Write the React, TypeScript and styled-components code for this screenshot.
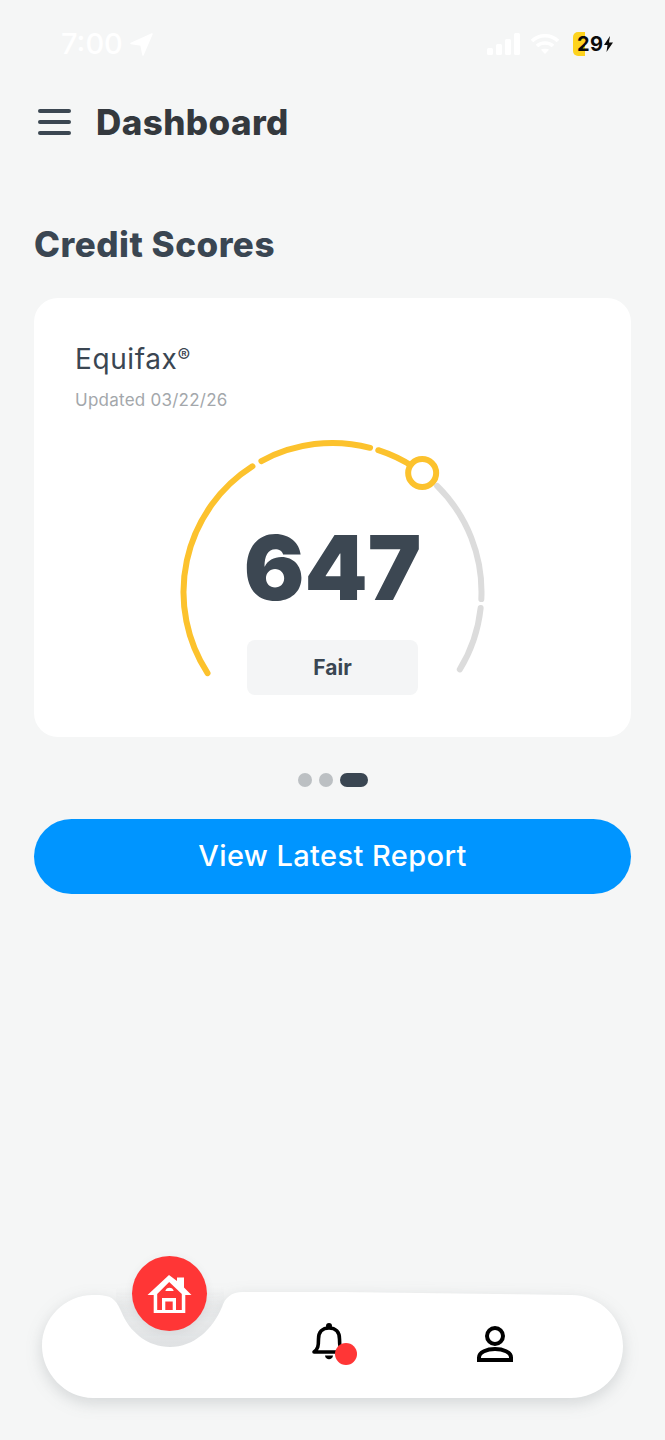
import styled, { createGlobalStyle } from 'styled-components';

const GAUGE_CX = 172.5;
const GAUGE_CY = 172;
const GAUGE_R = 149;

const polar = (deg: number) => {
  const rad = (deg * Math.PI) / 180;
  return [GAUGE_CX + GAUGE_R * Math.sin(rad), GAUGE_CY - GAUGE_R * Math.cos(rad)];
};

const arc = (from: number, to: number) => {
  const [x1, y1] = polar(from);
  const [x2, y2] = polar(to);
  const large = to - from > 180 ? 1 : 0;
  return `M${x1} ${y1} A${GAUGE_R} ${GAUGE_R} 0 ${large} 1 ${x2} ${y2}`;
};

const segments = [
  { from: -123, to: -32.5, color: '#fcc22d' },
  { from: -28.5, to: 14.6, color: '#fcc22d' },
  { from: 17.9, to: 33, color: '#fcc22d' },
  { from: 44.6, to: 92.7, color: '#dcdcdc' },
  { from: 96.2, to: 121.3, color: '#dcdcdc' },
];

const knob = polar(37);

const GlobalStyle = createGlobalStyle`
  html, body {
    margin: 0;
    padding: 0;
    background: #f5f6f6;
    font-family: Inter, "Liberation Sans", sans-serif;
  }
`;

const Page = styled.div`
  width: 665px;
  height: 1440px;
  display: flex;
  flex-direction: column;
  overflow: hidden;
  background: #f5f6f6;
`;

const StatusBar = styled.div`
  height: 32px;
  margin-top: 28px;
  padding: 0 52px 0 61px;
  display: flex;
  align-items: center;
  justify-content: space-between;
`;

const StatusGroup = styled.div<{ $gap: number }>`
  display: flex;
  align-items: center;
  gap: ${(p) => p.$gap}px;
`;

const Clock = styled.span`
  font-size: 29px;
  font-weight: 500;
  color: #ffffff;
  line-height: 32px;
`;

const Battery = styled.div`
  position: relative;
  width: 40px;
  height: 24px;
  margin-left: 4px;
  display: flex;
  align-items: center;
`;

const BatteryFill = styled.div`
  position: absolute;
  left: 0;
  top: 0;
  width: 12px;
  height: 24px;
  border-radius: 5px 0 0 5px;
  background: #fdd31f;
`;

const BatteryText = styled.span`
  position: relative;
  margin-left: 4px;
  font-size: 20px;
  font-weight: 700;
  color: #0b0b0b;
  line-height: 24px;
  letter-spacing: 0.5px;
`;

const Header = styled.div`
  display: flex;
  align-items: center;
  gap: 25px;
  margin-top: 42px;
  padding-left: 38px;
  height: 40px;
`;

const Burger = styled.div`
  width: 33px;
  display: flex;
  flex-direction: column;
  gap: 7.5px;
`;

const BurgerLine = styled.span`
  display: block;
  height: 3.5px;
  border-radius: 2px;
  background: #3c4752;
`;

const HeaderTitle = styled.h1`
  margin: 0;
  font-size: 35px;
  font-weight: 800;
  line-height: 40px;
  letter-spacing: 0.4px;
  color: #34393e;
`;

const SectionTitle = styled.h2`
  margin: 82px 0 0 34px;
  font-size: 35px;
  font-weight: 800;
  line-height: 40px;
  letter-spacing: 0.5px;
  color: #3a4652;
`;

const Card = styled.section`
  margin: 34px 34px 0;
  height: 439px;
  box-sizing: border-box;
  padding-top: 44px;
  border-radius: 24px;
  background: #ffffff;
  display: flex;
  flex-direction: column;
`;

const Provider = styled.div`
  margin-left: 41px;
  font-size: 28px;
  line-height: 34px;
  letter-spacing: 0.6px;
  color: #3a4652;
`;

const Registered = styled.sup`
  font-size: 19px;
  line-height: 0;
  vertical-align: 7px;
`;

const Updated = styled.div`
  margin: 13px 0 0 41px;
  font-size: 17px;
  line-height: 22px;
  letter-spacing: 0.25px;
  color: #a3a7ab;
`;

const Gauge = styled.div`
  position: relative;
  width: 345px;
  height: 290px;
  margin: 9px auto 0;
  display: flex;
  flex-direction: column;
  align-items: center;
`;

const GaugeArt = styled.svg`
  position: absolute;
  inset: 0;
`;

const Score = styled.div`
  position: relative;
  margin-top: 98px;
  font-size: 90px;
  font-weight: 900;
  line-height: 100px;
  color: #3c4752;
`;

const Rating = styled.div`
  position: relative;
  width: 171px;
  height: 55px;
  margin-top: 22px;
  border-radius: 8px;
  background: #f4f5f6;
  display: flex;
  align-items: center;
  justify-content: center;
  font-size: 21px;
  font-weight: 700;
  color: #3a4652;
`;

const Pager = styled.div`
  margin-top: 36px;
  display: flex;
  justify-content: center;
  gap: 7px;
`;

const PagerDot = styled.span<{ $active?: boolean }>`
  width: ${(p) => (p.$active ? '28px' : '14px')};
  height: 14px;
  border-radius: 7px;
  background: ${(p) => (p.$active ? '#3a4652' : '#bcc0c3')};
`;

const ReportButton = styled.button`
  margin: 32px 34px 0;
  height: 75px;
  padding: 0 0 2px;
  border: 0;
  border-radius: 38px;
  background: #0095ff;
  color: #ffffff;
  font-family: inherit;
  font-size: 29px;
  font-weight: 500;
  letter-spacing: 0.4px;
`;

const Nav = styled.nav`
  position: relative;
  margin: auto 42px 42px 41px;
  height: 107px;
  display: grid;
  grid-template-columns: 258px 60px 1fr;
  align-items: center;
`;

const NavShape = styled.svg`
  position: absolute;
  inset: 0;
  overflow: visible;
  filter: drop-shadow(0 5px 8px rgba(60, 70, 80, 0.18));
`;

const NavSlot = styled.div<{ $shift?: number; $lift?: number }>`
  position: relative;
  display: flex;
  justify-content: center;
  padding-left: ${(p) => p.$shift ?? 0}px;
  padding-bottom: ${(p) => p.$lift ?? 0}px;
`;

const Fab = styled.div`
  position: absolute;
  left: 91px;
  top: -35px;
  width: 75px;
  height: 75px;
  border-radius: 50%;
  background: #ff3636;
  box-shadow: 0 2px 10px rgba(60, 70, 80, 0.08);
  display: flex;
  align-items: center;
  justify-content: center;
`;

const Badge = styled.span`
  position: absolute;
  left: 36px;
  top: 21px;
  width: 22px;
  height: 22px;
  border-radius: 50%;
  background: #ff3636;
`;

const App = () => {
  return (
    <Page>
      <GlobalStyle />
      <StatusBar>
        <StatusGroup $gap={7}>
          <Clock>7:00</Clock>
          <svg width="23" height="23" viewBox="0 0 23 23">
            <path d="M22 1 L1 10.5 L11 12 L13 22 Z" fill="#fff" stroke="#fff" strokeWidth="1.5" strokeLinejoin="round" />
          </svg>
        </StatusGroup>
        <StatusGroup $gap={9}>
          <svg width="34" height="22" viewBox="0 0 34 22" fill="#fff">
            <rect x="0" y="15" width="6" height="7" rx="1.5" />
            <rect x="9" y="11" width="6" height="11" rx="1.5" />
            <rect x="18" y="6" width="6" height="16" rx="1.5" />
            <rect x="27" y="0" width="6" height="22" rx="1.5" />
          </svg>
          <svg width="30" height="22" viewBox="0 0 30 22" fill="none" stroke="#fff" strokeLinecap="butt">
            <path d="M2 8 C9 1 21 1 28 8" strokeWidth="3.6" />
            <path d="M7 13 C11 9 19 9 23 13" strokeWidth="3.6" />
            <path d="M15 21 L11 16.8 C13 15.4 17 15.4 19 16.8 Z" fill="#fff" stroke="none" />
          </svg>
          <Battery>
            <BatteryFill />
            <BatteryText>29</BatteryText>
            <svg width="9" height="16" viewBox="0 0 9 16">
              <path d="M6 0 L0 9 H3.5 L2.5 16 L9 6.5 H5 Z" fill="#0b0b0b" />
            </svg>
          </Battery>
        </StatusGroup>
      </StatusBar>

      <Header>
        <Burger>
          <BurgerLine />
          <BurgerLine />
          <BurgerLine />
        </Burger>
        <HeaderTitle>Dashboard</HeaderTitle>
      </Header>

      <SectionTitle>Credit Scores</SectionTitle>

      <Card>
        <Provider>
          Equifax<Registered>®</Registered>
        </Provider>
        <Updated>Updated 03/22/26</Updated>
        <Gauge>
          <GaugeArt width="345" height="290" viewBox="0 0 345 290" fill="none">
            {segments.map((s) => (
              <path key={s.from} d={arc(s.from, s.to)} stroke={s.color} strokeWidth="6" strokeLinecap="round" />
            ))}
            <circle cx={knob[0]} cy={knob[1]} r="14" stroke="#fcc22d" strokeWidth="6" fill="#fff" />
          </GaugeArt>
          <Score>647</Score>
          <Rating>Fair</Rating>
        </Gauge>
      </Card>

      <Pager>
        <PagerDot />
        <PagerDot />
        <PagerDot $active />
      </Pager>

      <ReportButton>View Latest Report</ReportButton>

      <Nav>
        <NavShape width="582" height="107" viewBox="0 0 582 107">
          <defs>
            <linearGradient id="notch" x1="0" y1="0" x2="0" y2="1">
              <stop offset="0.42" stopColor="#dfe1e3" stopOpacity="0" />
              <stop offset="0.75" stopColor="#e8eaeb" stopOpacity="0.8" />
              <stop offset="1" stopColor="#dee0e2" />
            </linearGradient>
          </defs>
          <circle cx="129" cy="4" r="54" fill="url(#notch)" />
          <path
            d="M52 4 C60 4 68 4 73 9 C77 13 78 16 80 20 C88 41 107 56 129 56 C153 56 172 38 181 16 C184 7 190 1 202 1 L300 1 L530 4 C560 4 582 28 582 55 C582 85 558 107 530 107 L52 107 C24 107 1 82 1 55 C1 27 24 4 52 4 Z"
            fill="#fff"
          />
        </NavShape>
        <Fab>
          <svg width="45" height="40" viewBox="0 0 45 40">
            <path d="M22 1 L30 7 V3.5 H37 V13.5 L44.5 21 H38.3 V39 H6.7 V21 H0.5 Z" fill="#fff" />
            <path d="M22.2 8 L34.8 20 V36 H10.2 V20 Z" fill="#ff3636" />
            <path d="M15 39 V24 H29 V39 H25.7 V27.5 H18.3 V39 Z" fill="#fff" />
            <path d="M18.3 17 C19 12.5 26 12.5 26.7 17 Z" fill="#fff" />
          </svg>
        </Fab>
        <NavSlot />
        <NavSlot $lift={5}>
          <svg width="34" height="40" viewBox="0 0 34 40" fill="none">
            <path
              d="M2 30 C6 27 6.5 24 6.5 17 C6.5 10 10.5 6 17 6 C23.5 6 27.5 10 27.5 17 C27.5 24 28 27 32 30 Z"
              stroke="#000"
              strokeWidth="3.6"
              strokeLinejoin="round"
            />
            <circle cx="17" cy="4" r="3" fill="#000" />
            <path d="M13 33.5 H21 C20.5 38.5 13.5 38.5 13 33.5 Z" fill="#000" />
          </svg>
          <Badge />
        </NavSlot>
        <NavSlot $shift={8} $lift={1}>
          <svg width="37" height="36" viewBox="0 0 37 36" fill="none" stroke="#000" strokeWidth="4">
            <circle cx="18" cy="10" r="8" />
            <path d="M2 34 V31.5 C2 26 10 23 18 23 C26 23 34 26 34 31.5 V34 Z" />
          </svg>
        </NavSlot>
      </Nav>
    </Page>
  );
};

export default App;
